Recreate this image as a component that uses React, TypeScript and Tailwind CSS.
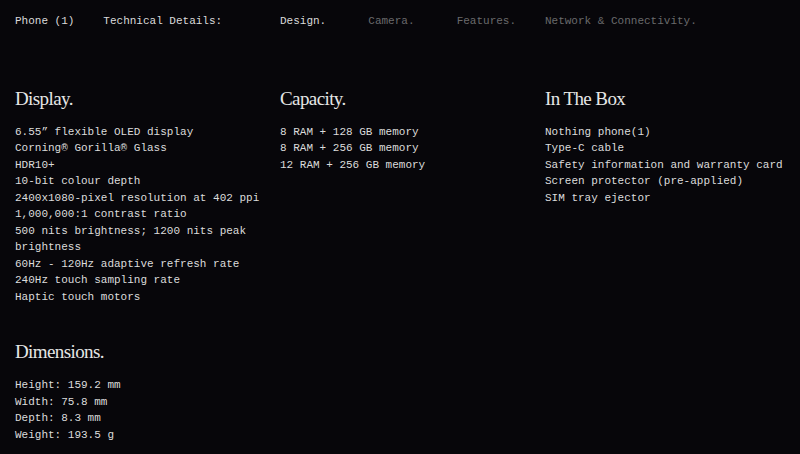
const mono = "font-['Liberation_Mono',monospace]";
const serif = "font-['Liberation_Serif',serif]";

interface SpecBlock {
  title: string;
  items: string[];
}

const display: SpecBlock = {
  title: "Display.",
  items: [
    "6.55\u201D flexible OLED display",
    "Corning\u00AE Gorilla\u00AE Glass",
    "HDR10+",
    "10-bit colour depth",
    "2400x1080-pixel resolution at 402 ppi",
    "1,000,000:1 contrast ratio",
    "500 nits brightness; 1200 nits peak brightness",
    "60Hz - 120Hz adaptive refresh rate",
    "240Hz touch sampling rate",
    "Haptic touch motors",
  ],
};

const dimensions: SpecBlock = {
  title: "Dimensions.",
  items: ["Height: 159.2 mm", "Width: 75.8 mm", "Depth: 8.3 mm", "Weight: 193.5 g"],
};

const capacity: SpecBlock = {
  title: "Capacity.",
  items: ["8 RAM + 128 GB memory", "8 RAM + 256 GB memory", "12 RAM + 256 GB memory"],
};

const inTheBox: SpecBlock = {
  title: "In The Box",
  items: [
    "Nothing phone(1)",
    "Type-C cable",
    "Safety information and warranty card",
    "Screen protector (pre-applied)",
    "SIM tray ejector",
  ],
};

function Spec({ block }: { block: SpecBlock }) {
  return (
    <div className="w-[252px]">
      <h2 className={`${serif} text-[19px] leading-[20px] tracking-[-0.6px] text-[#e6e6e6]`}>{block.title}</h2>
      <ul className={`${mono} mt-[15px] text-[11px] leading-[16.5px] text-[#dcdcdc]`}>
        {block.items.map((item) => (
          <li key={item}>{item}</li>
        ))}
      </ul>
    </div>
  );
}

export default function App() {
  return (
    <div className="w-[800px] h-[454px] overflow-hidden bg-[#07060a]">
      <nav className={`${mono} grid grid-cols-[repeat(9,88.33px)] pl-[15px] pt-[13px] text-[11px] leading-[16.5px]`}>
        <span className="text-[#dadada]">Phone (1)</span>
        <span className="col-span-2 text-[#dadada]">Technical Details:</span>
        <span className="text-[#dadada]">Design.</span>
        <span className="text-[#6a6a6c]">Camera.</span>
        <span className="text-[#6a6a6c]">Features.</span>
        <span className="col-span-3 text-[#6a6a6c]">Network &amp; Connectivity.</span>
      </nav>

      <div className="grid grid-cols-[repeat(3,265px)] pl-[15px] pt-[59px]">
        <div className="flex flex-col gap-[37px]">
          <Spec block={display} />
          <Spec block={dimensions} />
        </div>
        <Spec block={capacity} />
        <Spec block={inTheBox} />
      </div>
    </div>
  );
}
